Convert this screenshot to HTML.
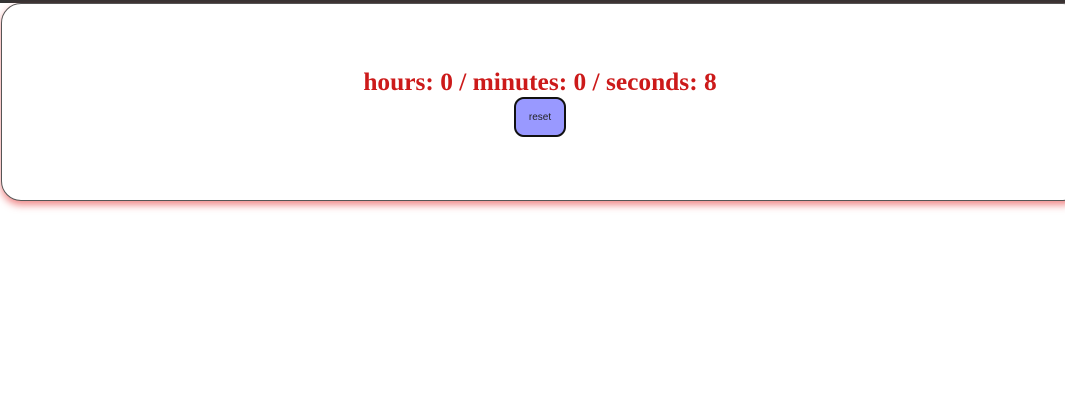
<!DOCTYPE html>
<html><head><style>
html,body{margin:0;padding:0;width:1065px;height:408px;overflow:hidden;background:#fff;}
.top{position:absolute;left:0;top:0;width:1065px;height:3px;background:#333;}
.box{position:absolute;left:1px;top:3px;width:1080px;height:196px;border:1px solid #555;border-radius:20px;background:#fff;box-shadow:0 4px 8px rgba(230,60,60,0.6);}
.h{position:absolute;left:340px;top:68px;width:400px;text-align:center;font:bold 25.4px "Liberation Serif",serif;color:#cc1a1a;white-space:nowrap;}
button{position:absolute;left:514px;top:97px;width:52px;height:40px;background:#9999ff;border:2px solid #111;border-radius:10px;font:10px "Liberation Sans",sans-serif;color:#222;padding:0;}
</style></head><body>
<div class="top"></div>
<div class="box"></div>
<div class="h">hours: 0 / minutes: 0 / seconds: 8</div>
<button>reset</button>
</body></html>
